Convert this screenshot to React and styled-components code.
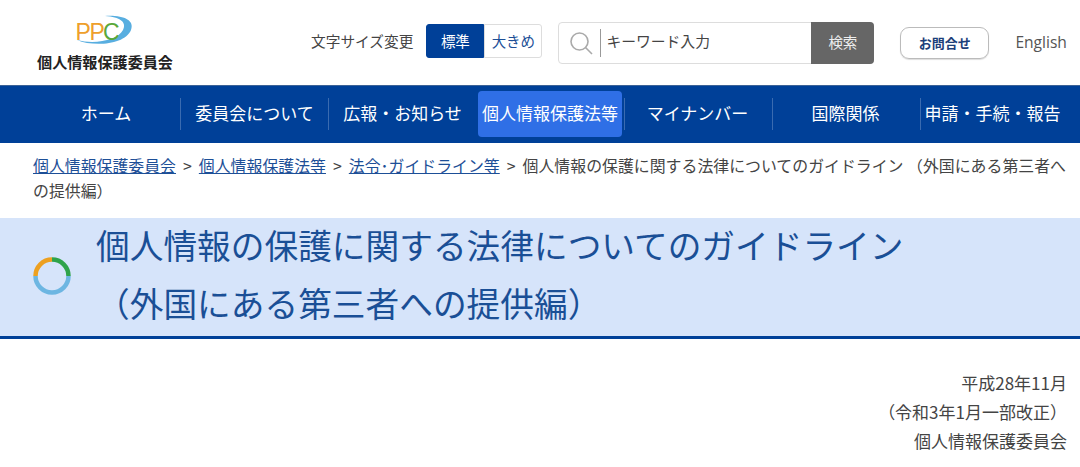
import React from 'react'
import styled, { createGlobalStyle } from 'styled-components'

const GlobalStyle = createGlobalStyle`
  html, body { margin: 0; padding: 0; background: #fff; }
  body {
    font-family: "Noto Sans CJK JP", "Noto Sans", sans-serif;
    color: #333;
    overflow: hidden;
  }
  * { box-sizing: border-box; }
`

const Page = styled.div`
  width: 1080px;
  height: 467px;
  overflow: hidden;
`

const Header = styled.header`
  height: 85px;
  display: flex;
  align-items: flex-start;
  padding: 0 13px 0 37px;
`

const Logo = styled.div`
  width: 136px;
  display: flex;
  flex-direction: column;
  align-items: center;
  padding-top: 14px;
`

const LogoMark = styled.svg`
  display: block;
  width: 60px;
  height: 34px;
`

const LogoName = styled.div`
  font-size: 15.1px;
  font-weight: 700;
  line-height: 20px;
  margin-top: 3px;
  white-space: nowrap;
  color: #222;
`

const Tools = styled.div`
  flex: 1;
  display: flex;
  align-items: center;
  height: 42px;
  margin-top: 22px;
  padding-left: 138px;
`

const SizeLabel = styled.span`
  font-size: 14.7px;
  line-height: 20px;
  color: #444;
  white-space: nowrap;
  margin-top: -5px;
`

const SizeSwitch = styled.div`
  display: flex;
  margin: -4px 16px 0 13px;
`

const SizeButton = styled.div`
  width: 58px;
  height: 34px;
  padding-bottom: 2px;
  display: flex;
  align-items: center;
  justify-content: center;
  font-size: 14.5px;
  color: ${p => (p.$active ? '#fff' : '#1d4f97')};
  background: ${p => (p.$active ? '#004098' : '#fff')};
  border: 1px solid ${p => (p.$active ? '#004098' : '#ddd')};
  border-radius: ${p => (p.$active ? '3px 0 0 3px' : '0 3px 3px 0')};
`

const Search = styled.div`
  width: 316px;
  height: 42px;
  display: flex;
  align-items: center;
  border: 1px solid #ddd;
  border-radius: 4px;
`

const SearchIcon = styled.svg`
  width: 26px;
  height: 26px;
  margin-left: 9px;
  flex: none;
`

const SearchInput = styled.div`
  flex: 1;
  height: 28px;
  margin-left: 6px;
  padding-left: 5px;
  border-left: 1px solid #999;
  font-size: 14.8px;
  line-height: 24px;
  color: #444;
`

const SearchButton = styled.div`
  width: 63px;
  height: 42px;
  margin: 0 -1px 0 0;
  padding-bottom: 3px;
  background: #666;
  color: #eee;
  font-size: 14.5px;
  display: flex;
  align-items: center;
  justify-content: center;
  border-radius: 0 4px 4px 0;
`

const Contact = styled.div`
  width: 89px;
  height: 32px;
  margin: 0 27px 0 26px;
  padding-bottom: 1px;
  border: 1px solid #bbb;
  border-radius: 9px;
  box-shadow: 0 1px 1px #ddd;
  display: flex;
  align-items: center;
  justify-content: center;
  font-size: 13px;
  font-weight: 700;
  color: #1d3f7a;
`

const English = styled.div`
  font-family: "Open Sans", "Noto Sans", sans-serif;
  font-size: 15.6px;
  color: #555;
  margin: -3px 0 0 -1px;
  white-space: nowrap;
`

const Nav = styled.nav`
  height: 58px;
  background: #004098;
  padding: 0 12px 0 32px;
  display: grid;
  grid-template-columns: repeat(7, 148px);
  align-items: center;
  box-shadow: inset 0 1px 0 #3c6296;
`

const NavItem = styled.div`
  height: ${p => (p.$active ? '46px' : '32px')};
  margin: 0 ${p => (p.$active ? '2px' : '0')};
  padding: 0 ${p => p.$nudge}px 4px 0;
  display: flex;
  align-items: center;
  justify-content: center;
  white-space: nowrap;
  font-size: 17px;
  color: #fff;
  background: ${p => (p.$active ? '#2f6fe6' : 'transparent')};
  border-radius: ${p => (p.$active ? '4px' : '0')};
  border-left: ${p => (p.$first || p.$active ? 'none' : '1px solid #3a6bb0')};
`

const Crumbs = styled.div`
  height: 75px;
  padding: 10px 13px 0 33px;
  font-size: 15.9px;
  line-height: 25px;
  color: #444;
`

const CrumbLink = styled.a`
  color: #1d4f97;
  text-decoration: underline;
`

const CrumbSep = styled.span`
  margin: 0 7px;
`

const TitleBand = styled.div`
  height: 121px;
  background: #d6e4fa;
  border-bottom: 3px solid #004098;
  display: flex;
  align-items: center;
  padding-left: 33px;
`

const Ring = styled.svg`
  width: 38px;
  height: 38px;
  flex: none;
  margin: -2px 25px 0 0;
`

const Title = styled.h1`
  margin: -7px 0 0;
  font-size: 33.7px;
  font-weight: 400;
  line-height: 57.5px;
  color: #1a4f96;
  white-space: nowrap;
`

const Meta = styled.div`
  padding: 29px 13px 0 0;
  text-align: right;
  font-size: 17px;
  line-height: 29px;
  color: #444;
`

const navItems = ['ホーム', '委員会について', '広報・お知らせ', '個人情報保護法等', 'マイナンバー', '国際関係', '申請・手続・報告']

export default function App() {
  return (
    <Page>
      <GlobalStyle />
      <Header>
        <Logo>
          <LogoMark viewBox="0 0 60 34">
            <path d="M2 26 C18 33 50 31 56 16 C60 6 48 1 30 2 C45 3 52 8 48 16 C43 26 20 31 2 26 Z" fill="#58aee0" />
            <text x="0.5" y="26" fontFamily="Liberation Sans, sans-serif" fontSize="23" fill="#ee9f2b">P</text>
            <text x="14.5" y="26" fontFamily="Liberation Sans, sans-serif" fontSize="23" fill="#ee9f2b">P</text>
            <text x="28" y="26" fontFamily="Liberation Sans, sans-serif" fontSize="23" fill="#5aa83a">C</text>
          </LogoMark>
          <LogoName>個人情報保護委員会</LogoName>
        </Logo>
        <Tools>
          <SizeLabel>文字サイズ変更</SizeLabel>
          <SizeSwitch>
            <SizeButton $active>標準</SizeButton>
            <SizeButton>大きめ</SizeButton>
          </SizeSwitch>
          <Search>
            <SearchIcon viewBox="0 0 26 26" fill="none" stroke="#aaa" strokeWidth="1.6">
              <circle cx="11.5" cy="11.5" r="8.5" />
              <path d="M17.5 17.5 L24 24" />
            </SearchIcon>
            <SearchInput>キーワード入力</SearchInput>
            <SearchButton>検索</SearchButton>
          </Search>
          <Contact>お問合せ</Contact>
          <English>English</English>
        </Tools>
      </Header>
      <Nav>
        {navItems.map((label, i) => (
          <NavItem key={label} $first={i === 0} $active={i === 3} $nudge={i === 6 ? 4 : i > 3 ? 2 : 0}>{label}</NavItem>
        ))}
      </Nav>
      <Crumbs>
        <CrumbLink>個人情報保護委員会</CrumbLink>
        <CrumbSep>&gt;</CrumbSep>
        <CrumbLink>個人情報保護法等</CrumbLink>
        <CrumbSep>&gt;</CrumbSep>
        <CrumbLink>法令･ガイドライン等</CrumbLink>
        <CrumbSep>&gt;</CrumbSep>
        個人情報の保護に関する法律についてのガイドライン （外国にある第三者への提供編）
      </Crumbs>
      <TitleBand>
        <Ring viewBox="0 0 38 38" fill="none" strokeWidth="4.5">
          <path d="M2.5 19 A16.5 16.5 0 0 0 35.5 19" stroke="#6db6e2" />
          <path d="M2.5 19 A16.5 16.5 0 0 1 19 2.5" stroke="#eda020" />
          <path d="M19 2.5 A16.5 16.5 0 0 1 35.5 19" stroke="#2fa34a" />
        </Ring>
        <Title>
          個人情報の保護に関する法律についてのガイドライン
          <br />
          （外国にある第三者への提供編）
        </Title>
      </TitleBand>
      <Meta>
        平成28年11月
        <br />
        （令和3年1月一部改正）
        <br />
        個人情報保護委員会
      </Meta>
    </Page>
  )
}
